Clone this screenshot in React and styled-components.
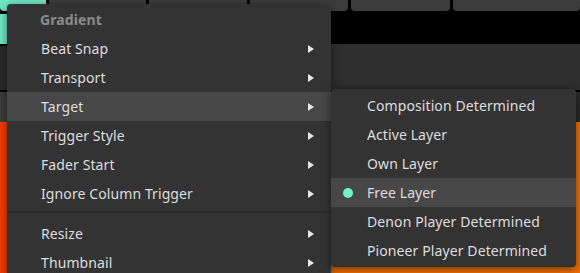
import React from 'react';
import styled, { createGlobalStyle } from 'styled-components';

const GlobalStyle = createGlobalStyle`
  html, body {
    margin: 0;
    padding: 0;
    background: #000;
  }
  body {
    font-family: "Noto Sans", "Open Sans", sans-serif;
  }
`;

const Screen = styled.div`
  position: relative;
  width: 580px;
  height: 273px;
  overflow: hidden;
  background: #000;
  display: flex;
  flex-direction: column;
`;

const Row = styled.div`
  display: flex;
  height: ${(p) => p.h}px;
  flex: ${(p) => (p.grow ? 1 : 'none')};
  gap: ${(p) => p.gap || 0}px;
  background: ${(p) => p.bg || 'transparent'};
`;

const Cell = styled.div`
  width: ${(p) => (p.w ? `${p.w}px` : 'auto')};
  flex: ${(p) => (p.w ? 'none' : 1)};
  background: ${(p) => p.bg};
  border-radius: ${(p) => (p.round ? '0 0 4px 4px' : '0')};
  border-top: ${(p) => (p.line ? `${p.line}px solid #000` : 'none')};
  color: ${(p) => p.fg || '#111'};
  font-size: 14px;
  line-height: 1;
  display: flex;
  align-items: center;
  justify-content: flex-end;
  overflow: hidden;
  padding-right: ${(p) => p.pr || 0}px;
`;

const Menu = styled.div`
  position: absolute;
  left: 7px;
  top: 4px;
  width: 324px;
  padding-top: 1px;
  background: #333333;
  border-radius: 4px 4px 0 0;
  box-shadow: 0 2px 8px rgba(0, 0, 0, 0.5);
`;

const SubMenu = styled.div`
  position: absolute;
  left: 331px;
  top: 89px;
  width: 245px;
  padding: 2px 0;
  background: #333333;
  border-radius: 4px;
  box-shadow: 0 2px 8px rgba(0, 0, 0, 0.55);
`;

const Item = styled.div`
  position: relative;
  height: 29px;
  display: flex;
  align-items: center;
  padding-left: ${(p) => p.indent}px;
  padding-right: 17px;
  background: ${(p) => (p.active ? '#474747' : 'transparent')};
  color: #dedede;
  font-size: 14px;
  letter-spacing: 0.1px;
  white-space: nowrap;
`;

const Header = styled(Item)`
  color: #8b8b8b;
  font-weight: 700;
`;

const Label = styled.span`
  flex: 1;
`;

const Arrow = styled.span`
  width: 0;
  height: 0;
  border-top: 4.5px solid transparent;
  border-bottom: 4.5px solid transparent;
  border-left: 6px solid #e6e6e6;
`;

const Bullet = styled.span`
  position: absolute;
  left: 12px;
  top: 9.5px;
  width: 10px;
  height: 10px;
  border-radius: 50%;
  background: #70f2c8;
`;

const Separator = styled.div`
  height: 2px;
  margin: 3px 0 6px;
  background: #2a2a2a;
`;

const mainItems = [
  { label: 'Beat Snap' },
  { label: 'Transport' },
  { label: 'Target', active: true },
  { label: 'Trigger Style' },
  { label: 'Fader Start' },
  { label: 'Ignore Column Trigger' },
  { sep: true },
  { label: 'Resize' },
  { label: 'Thumbnail' },
];

const targets = [
  'Composition Determined',
  'Active Layer',
  'Own Layer',
  'Free Layer',
  'Denon Player Determined',
  'Pioneer Player Determined',
];

export default function App() {
  return (
    <>
      <GlobalStyle />
      <Screen>
        <Row h={11} gap={3}>
          <Cell w={46} bg="#6fe8c4" round />
          <Cell w={97} bg="#3c3c3c" round />
          <Cell w={98} bg="#3c3c3c" round />
          <Cell w={98} bg="#3c3c3c" round />
          <Cell w={99} bg="#3c3c3c" round />
          <Cell bg="#3c3c3c" round />
        </Row>
        <Row h={33}>
          <Cell w={48} bg="#6fe8c4" line={3} pr={37}>e</Cell>
          <Cell bg="#000" />
        </Row>
        <Row h={46} bg="#2e2e2e">
          <Cell w={48} bg="#2a2a2a" line={2} pr={38} fg="#ccc">T</Cell>
          <Cell bg="#2e2e2e" />
        </Row>
        <Row h={32}>
          <Cell w={48} bg="#3c3c3c" line={2} pr={38} fg="#ddd">o</Cell>
          <Cell bg="#2a2a2a" line={2} />
        </Row>
        <Row grow>
          <Cell w={48} bg="#f23c00" />
          <Cell bg="#f07000" />
        </Row>

        <Menu>
          <Header indent={33}>Gradient</Header>
          {mainItems.map((it, i) =>
            it.sep ? (
              <Separator key={i} />
            ) : (
              <Item key={i} indent={34} active={it.active}>
                <Label>{it.label}</Label>
                <Arrow />
              </Item>
            )
          )}
        </Menu>

        <SubMenu>
          {targets.map((t) => (
            <Item key={t} indent={36} active={t === 'Free Layer'}>
              {t === 'Free Layer' && <Bullet />}
              <Label>{t}</Label>
            </Item>
          ))}
        </SubMenu>
      </Screen>
    </>
  );
}
